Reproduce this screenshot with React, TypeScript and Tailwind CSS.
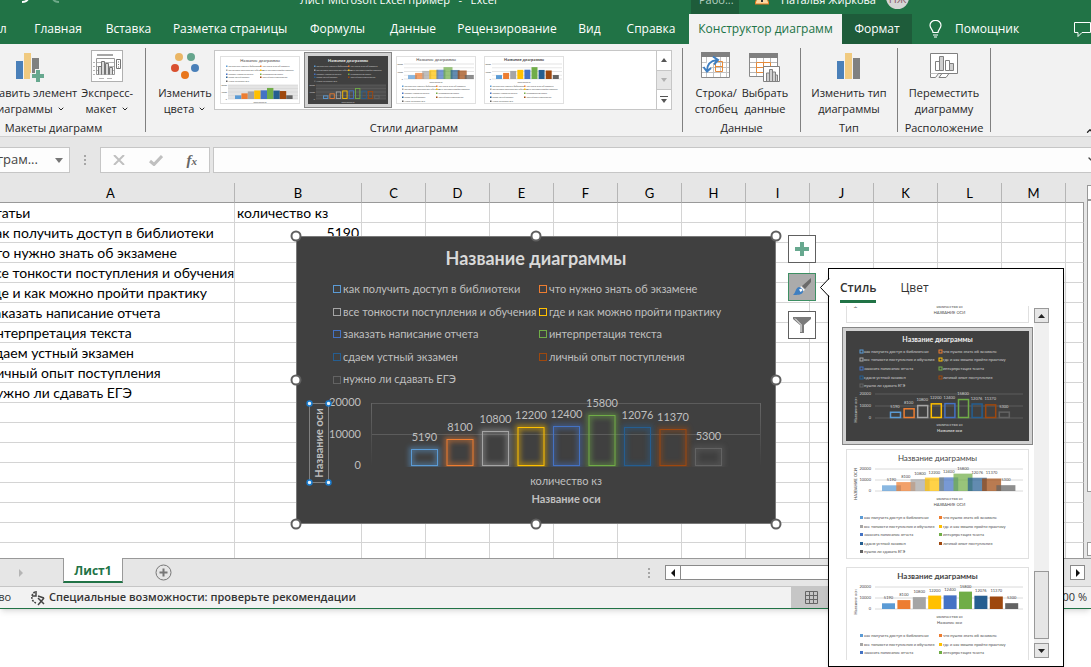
import { useState } from 'react';
import type { ReactNode } from 'react';
import { ChevronDown, ChevronUp } from 'lucide-react';
import clsx from 'clsx';

type Item = { label: string; value: number; color: string };

const ITEMS: Item[] = [
  { label: 'как получить доступ в библиотеки', value: 5190, color: '#5b9bd5' },
  { label: 'что нужно знать об экзамене', value: 8100, color: '#ed7d31' },
  { label: 'все тонкости поступления и обучения', value: 10800, color: '#a5a5a5' },
  { label: 'где и как можно пройти практику', value: 12200, color: '#ffc000' },
  { label: 'заказать написание отчета', value: 12400, color: '#4472c4' },
  { label: 'интерпретация текста', value: 15800, color: '#70ad47' },
  { label: 'сдаем устный экзамен', value: 12076, color: '#255e91' },
  { label: 'личный опыт поступления', value: 11370, color: '#9e480e' },
  { label: 'нужно ли сдавать ЕГЭ', value: 5300, color: '#636363' },
];

const TABS = [
  { label: 'Главная', width: 'w-[72px]' },
  { label: 'Вставка', width: 'w-[69px]' },
  { label: 'Разметка страницы', width: 'w-[134px]' },
  { label: 'Формулы', width: 'w-[81px]' },
  { label: 'Данные', width: 'w-[70px]' },
  { label: 'Рецензирование', width: 'w-[118px]' },
  { label: 'Вид', width: 'w-[47px]' },
  { label: 'Справка', width: 'w-[76px]' },
];

const COLUMNS = ['A', 'B', 'C', 'D', 'E', 'F', 'G', 'H', 'I', 'J', 'K', 'L', 'M', ''];
const ROWS = [
  ['статьи', 'количество кз'],
  ...ITEMS.map((item) => [item.label, String(item.value)]),
  ...Array.from({ length: 10 }, () => ['', '']),
];

type Tone = 'plain' | 'dark' | 'overlap' | 'solid';

type ThumbLayout = {
  width: number;
  height: number;
  title: number;
  titleSize: number;
  textSize: number;
  legend: number[];
  legendX: [number, number];
  plot: [number, number, number, number];
  barStart: number;
  step: number;
  barWidth: number;
  caption: number;
  axis?: number;
};

const RIBBON_TOP: ThumbLayout = {
  width: 80, height: 48, title: 6, titleSize: 4, textSize: 2, legend: [11, 15, 19, 22, 26], legendX: [6, 40],
  plot: [8, 78, 29, 43], barStart: 15, step: 6.4, barWidth: 6.4, caption: 46,
};
const RIBBON_BOTTOM: ThumbLayout = {
  width: 80, height: 48, title: 5, titleSize: 4, textSize: 2, legend: [31, 34, 38, 42, 46], legendX: [6, 40],
  plot: [8, 78, 8, 23], barStart: 12, step: 7.1, barWidth: 6, caption: 26,
};
const PANEL_TOP: ThumbLayout = {
  width: 183, height: 110, title: 11, titleSize: 7, textSize: 4, legend: [22, 30, 39, 48, 56], legendX: [14, 93],
  plot: [29, 177, 63, 87], barStart: 44, step: 13.6, barWidth: 10, caption: 94, axis: 101,
};
const PANEL_BOTTOM: ThumbLayout = {
  width: 183, height: 110, title: 12, titleSize: 8, textSize: 4, legend: [70, 79, 87, 96, 104], legendX: [14, 93],
  plot: [29, 177, 20, 42], barStart: 36, step: 15.4, barWidth: 13, caption: 50, axis: 57,
};

function ChartThumb({ tone, layout }: { tone: Tone; layout: ThumbLayout }) {
  const [x0, x1, y0, y1] = layout.plot;
  const dark = tone === 'dark';
  const ink = dark ? '#d0d0d0' : '#4a4a4a';
  const line = dark ? '#666' : '#d0d0d0';
  const small = layout.axis === undefined;
  const wide = tone === 'overlap';
  const sw = small ? 1.5 : 3;
  const axisTitle = wide ? 'НАЗВАНИЕ ОСИ' : 'Название оси';
  return (
    <svg
      viewBox={`0 0 ${layout.width} ${layout.height}`}
      className="block w-full"
      fontFamily="Lato, sans-serif"
      fontSize={layout.textSize}
      fill={ink}
      aria-hidden="true"
    >
      <rect x="0.5" y="0.5" width={layout.width - 1} height={layout.height - 1} fill={dark ? '#404040' : '#fff'} stroke={dark ? '#404040' : '#e0e0e0'} />
      <text
        x={layout.width / 2}
        y={layout.title}
        textAnchor="middle"
        fontSize={layout.titleSize}
        fontWeight={tone === 'dark' || tone === 'solid' ? 700 : 400}
        fill={dark ? '#eee' : '#444'}
      >
        Название диаграммы
      </text>
      {ITEMS.map((item, i) => {
        const x = layout.legendX[i % 2];
        const y = layout.legend[Math.floor(i / 2)];
        return (
          <g key={item.label}>
            <rect
              x={x}
              y={y - sw}
              width={sw}
              height={sw}
              fill={dark && !small ? 'none' : item.color}
              stroke={dark && !small ? item.color : 'none'}
              strokeWidth="1"
            />
            <text x={x + sw + 1} y={y}>{item.label}</text>
          </g>
        );
      })}
      {small && (tone === 'plain' || dark) && (
        <rect x={x0} y={y0} width={x1 - x0} height={y1 - y0} fill={dark ? '#4d4d4d' : '#e4e4e4'} />
      )}
      {[0, 10000, 20000].map((tick) => {
        const y = y1 - ((y1 - y0) * tick) / 20000;
        return (
          <g key={tick}>
            <line x1={x0} x2={x1} y1={y} y2={y} stroke={line} strokeWidth={small ? 0.6 : 0.8} />
            <text x={x0 - (small ? 1 : 4)} y={y + 1} textAnchor="end">{tick}</text>
          </g>
        );
      })}
      {small && [5000, 15000].map((tick) => {
        const y = y1 - ((y1 - y0) * tick) / 20000;
        return <line key={tick} x1={x0} x2={x1} y1={y} y2={y} stroke={line} strokeWidth="0.5" />;
      })}
      {ITEMS.map((item, i) => {
        const width = wide ? layout.barWidth + (small ? 3 : 6) : layout.barWidth;
        const step = wide && !small ? layout.step - 1.1 : layout.step;
        const x = layout.barStart + i * step;
        const h = ((y1 - y0) * item.value) / 20000;
        return (
          <g key={item.value}>
            {dark ? (
              <rect x={x + 0.5} y={y1 - h + 0.5} width={width - (small ? 2 : 0)} height={h - 1} fill="none" stroke={item.color} strokeWidth={small ? 0.9 : 1.5} />
            ) : (
              <rect x={x} y={y1 - h} width={width} height={h} fill={item.color} opacity={wide ? 0.72 : 1} />
            )}
            {!small && (
              <text x={x + width / 2} y={y1 - h - 4} textAnchor="middle">{item.value}</text>
            )}
          </g>
        );
      })}
      <text x={layout.width / 2 + (small ? 0 : 12)} y={layout.caption + 0.5} textAnchor="middle">количество кз</text>
      {layout.axis !== undefined && (
        <>
          <text x={layout.width / 2 + 12} y={layout.axis} textAnchor="middle" fontWeight={dark ? 700 : 400}>{axisTitle}</text>
          <text transform={`translate(11 ${(y0 + y1) / 2 + 4}) rotate(-90)`} textAnchor="middle">{axisTitle}</text>
        </>
      )}
    </svg>
  );
}

function BarsIcon({ plus = false }: { plus?: boolean }) {
  return (
    <svg width="32" height="32" viewBox="0 0 32 32" aria-hidden="true">
      <path fill="#4a80b9" d="M4 11h7v18H4z" />
      <path fill="#f0ca80" d="M12 3h7v26h-7z" />
      <path fill="#808080" d="M20 8h7v21h-7z" />
      {plus && (
        <>
          <path fill="#f2f2f2" d="M23 19h6v4h4v6h-4v4h-6v-4h-5v-6h5z" />
          <path fill="#67a88f" d="M24 20h4v4h4v4h-4v4h-4v-4h-4v-4h4z" />
        </>
      )}
    </svg>
  );
}

function LayoutIcon() {
  return (
    <svg width="32" height="32" viewBox="0 0 32 32" fill="none" stroke="#757575" aria-hidden="true">
      <rect x="0.5" y="0.5" width="31" height="31" fill="#fff" stroke="#b0b0b0" />
      <path d="M6 5h16" strokeWidth="2" stroke="#a6a6a6" />
      <path d="M5.500 8.500h18v16h-18z" stroke="#999" />
      <path d="M2 12.500h2M2 16.500h2M2 20.500h2M2 24.500h2M8 28.500h5M16 28.500h5M6 12.500h17M6 16.500h17M6 20.500h17" stroke="#b5b5b5" />
      <path d="M7.500 24.500v-8h3v8M10.500 24.500v-13h3v13M14.500 24.500v-11h3v11M18.500 24.500v-7h3v7" fill="#d9d9d9" />
      <path d="M25.500 9.500h4v9h-4z" />
      <path d="M27 12h1M27 14.500h1M27 17h1" />
    </svg>
  );
}

function ColorsIcon() {
  return (
    <svg width="32" height="32" viewBox="0 0 32 32" aria-hidden="true">
      <circle cx="10" cy="7" r="4" fill="#eab665" />
      <circle cx="22" cy="7" r="4" fill="#66a58d" />
      <circle cx="6" cy="18" r="4" fill="#d9502f" />
      <circle cx="26" cy="18" r="4" fill="#4a80b9" />
      <circle cx="16" cy="25" r="4" fill="#e8761c" />
    </svg>
  );
}

function SwitchIcon() {
  return (
    <svg width="32" height="32" viewBox="0 0 32 32" fill="none" aria-hidden="true">
      <path d="M1.500 3.500h28v24h-28z" fill="#fff" stroke="#8a8a8a" />
      <path d="M1 2h29v5H1z" fill="#808080" />
      <path d="M2 12.500h27M2 17.500h27M2 22.500h27M6.500 7v20M13.500 7v20M20.500 7v20M26.500 7v20" stroke="#c4c4c4" />
      <path d="M15.500 11.500h7v10h-7zM15.500 16.500h7" stroke="#e58a3a" />
      <path d="M7 21c0-7 3-10 9-11" stroke="#fff" strokeWidth="5" />
      <path d="M7 21c0-7 3-10 10-11M13 6.500l5 3.500-4 4.500M3.500 17l3.500 4.500 4-3.500" stroke="#3f7fc1" strokeWidth="2" />
    </svg>
  );
}

function SelectDataIcon() {
  return (
    <svg width="32" height="32" viewBox="0 0 32 32" fill="none" aria-hidden="true">
      <path d="M.5 4.500h28v22H.5z" fill="#fff" stroke="#8a8a8a" />
      <path d="M0 3h29v5H0z" fill="#808080" />
      <path d="M1 12.500h27M1 17.500h27M1 22.500h27M7.500 8v18M14.500 8v18M21.500 8v18" stroke="#b8b8b8" />
      <path d="M7.500 12.500h14v10h-14zM14.500 12.500v10M7.500 17.500h14" stroke="#e58a3a" />
      <path d="M14.500 16.500h16v15h-16z" fill="#fff" stroke="#808080" />
      <path d="M17.500 31v-8h3v8M20.500 31V19.500h3V31M23.500 31v-9h3v9M26.500 31v-6h2v6" fill="#d0d0d0" stroke="#808080" />
    </svg>
  );
}

function MoveIcon() {
  return (
    <svg width="32" height="32" viewBox="0 0 32 32" fill="none" stroke="#808080" aria-hidden="true">
      <path d="M2.500 3.500h27v20h-27z" fill="#fff" />
      <path d="M2.500 23.500v4h5l3-4M11 27.500h7l3-4h-7z" fill="#fff" />
      <path d="M7.500 20.500v-9h4v9zM17.500 20.500v-10h4v10z" fill="#fff" />
      <path d="M11.500 20.500v-14h4v14zM21.500 20.500v-7h4v7z" fill="#cfcfcf" />
    </svg>
  );
}

function RibbonButton({ icon, lines, menu = false }: { icon: ReactNode; lines: [string, string]; menu?: boolean }) {
  return (
    <button type="button" className="flex shrink-0 flex-col items-center whitespace-nowrap px-0.5 pt-1.5 text-center leading-4">
      {icon}
      <span className="mt-[3px]">{lines[0]}</span>
      <span className="flex items-center gap-1">
        {lines[1]}
        {menu && <ChevronDown size={8} strokeWidth={3} />}
      </span>
    </button>
  );
}

function RibbonGroup({ title, className, children }: { title: string; className: string; children: ReactNode }) {
  return (
    <section className={clsx('flex shrink-0 flex-col', className)}>
      <div className="flex flex-1 justify-center">{children}</div>
      <h2 className="whitespace-nowrap text-center leading-4">{title}</h2>
    </section>
  );
}

function Divider() {
  return <div className="my-1 w-px shrink-0 bg-[#808080]" />;
}

function StyleGallery({ selected, onSelect }: { selected: number; onSelect: (i: number) => void }) {
  const tones: Tone[] = ['plain', 'dark', 'overlap', 'solid'];
  return (
    <div className="mt-1.5 flex h-[60px] w-[458px] border border-[#c6c6c6] bg-white">
      <div className="flex flex-1 items-center pl-px">
        {tones.map((tone, i) => (
          <button
            key={tone}
            type="button"
            aria-label={`Стиль ${i + 1}`}
            onClick={() => onSelect(i)}
            className={clsx('w-[88px] border p-[3px]', selected === i ? 'border-[#868686] bg-[#d2d2d2]' : 'border-transparent')}
          >
            <ChartThumb tone={tone} layout={i < 2 ? RIBBON_TOP : RIBBON_BOTTOM} />
          </button>
        ))}
      </div>
      <div className="flex w-[15px] flex-col border-l border-[#c6c6c6]">
        <button type="button" aria-label="Вверх" className="flex flex-1 items-center justify-center">
          <svg width="6" height="4"><path d="M0 4h6L3 0z" fill="#555" /></svg>
        </button>
        <button type="button" aria-label="Вниз" className="flex flex-1 items-center justify-center border-y border-[#c6c6c6] bg-[#e6e6e6]">
          <svg width="6" height="4"><path d="M0 0h6L3 4z" fill="#b0b0b0" /></svg>
        </button>
        <button type="button" aria-label="Все стили" className="flex flex-1 items-center justify-center">
          <svg width="8" height="7"><path d="M0 0h8v1H0zM1 3h6L4 7z" fill="#555" /></svg>
        </button>
      </div>
    </div>
  );
}

function TitleBar() {
  return (
    <div className="flex h-[14px] items-start overflow-hidden text-[11px] text-white">
      <svg width="300" height="14" className="shrink-0" fill="none" aria-hidden="true">
        <path d="M22 2c3 0 5-1 6-3" stroke="#fff" strokeWidth="2" />
        <path d="M59 2c-3 0-5-1-6-3" stroke="#6fa98a" strokeWidth="2" />
      </svg>
      <span className="-mt-2 flex-1 whitespace-pre leading-4">Лист Microsoft Excel пример   -   Excel</span>
      <div className="h-full w-12 bg-[#1e5c3a] pl-2">
        <span className="-mt-2 block leading-4 text-[#b5cfc0]">Рабо...</span>
      </div>
      <svg width="14" height="5" className="ml-4 shrink-0" aria-hidden="true">
        <path d="M3-5h8l3 9H0z" fill="#fcd9a0" stroke="#e8761c" />
        <path d="M6 0h2v2H6z" fill="#333" />
      </svg>
      <span className="-mt-2 ml-3 w-[95px] whitespace-nowrap leading-4">Наталья Жиркова</span>
      <span className="-mt-3.5 ml-2.5 mr-[182px] flex size-[23px] items-end justify-center rounded-full bg-[#d5d5d5] leading-5 text-[#8a5a6a]">НЖ</span>
    </div>
  );
}

function RibbonTabs() {
  return (
    <nav className="flex h-[30px] text-white" aria-label="Лента">
      <button type="button" className="-ml-6 w-[46px] pr-4 text-right">Файл</button>
      {TABS.map((tab) => (
        <button key={tab.label} type="button" className={clsx('shrink-0 whitespace-nowrap', tab.width)}>
          {tab.label}
        </button>
      ))}
      <button type="button" className="w-[153px] shrink-0 whitespace-nowrap bg-[#f2f2f2] text-[#217346]">Конструктор диаграмм</button>
      <button type="button" className="w-[70px] shrink-0 bg-[#1e5c3a]">Формат</button>
      <button type="button" className="ml-4 flex items-center gap-3">
        <svg width="15" height="18" fill="none" stroke="#fff" strokeWidth="1.200" aria-hidden="true">
          <path d="M5 12.500c0-3-3-4-3-7.200a5.500 5 0 0 1 11 0c0 3.200-3 4.200-3 7.200zM5 15h5M6 17h3" />
        </svg>
        Помощник
      </button>
      <button type="button" aria-label="Примечания" className="-mr-px ml-auto">
        <svg width="18" height="16" fill="none" stroke="#fff" aria-hidden="true">
          <path d="M.5 1.500h16v10H8l-4 4v-4H.5z" />
        </svg>
      </button>
    </nav>
  );
}

function FormulaBar() {
  return (
    <div className="flex h-[46px] shrink-0 items-start bg-[#e6e6e6] pt-2.5 text-[#444]">
      <button type="button" className="-ml-14 flex h-[26px] w-[126px] items-center justify-between border border-[#c6c6c6] bg-[#fdfdfd] pl-7 pr-1.5 text-[13px]">
        <span>Диаграм...</span>
        <svg width="8" height="5" aria-hidden="true"><path d="M0 0h8L4 5z" fill="#777" /></svg>
      </button>
      <svg width="30" height="26" fill="#a6a6a6" aria-hidden="true"><path d="M14 8h2v2h-2zM14 12h2v2h-2zM14 16h2v2h-2z" /></svg>
      <div className="flex h-[26px] w-[110px] items-center justify-between border border-[#c6c6c6] bg-[#fdfdfd] pl-3 pr-3">
        <button type="button" aria-label="Отмена">
          <svg width="12" height="10" fill="none" stroke="#c0c0c0" strokeWidth="2"><path d="M1 0l10 10M11 0L1 10" /></svg>
        </button>
        <button type="button" aria-label="Ввод">
          <svg width="14" height="11" fill="none" stroke="#c0c0c0" strokeWidth="3"><path d="M1 6l4 3.500L13 1" /></svg>
        </button>
        <button type="button" className="font-['Liberation_Serif',serif] text-[15px] font-bold italic leading-5 text-[#666]">
          f<span className="text-[11px]">x</span>
        </button>
      </div>
      <input aria-label="Строка формул" className="ml-[3px] h-[26px] min-w-0 flex-1 border border-r-0 border-[#c6c6c6] bg-[#fdfdfd] outline-none" />
      <ChevronDown size={8} strokeWidth={4} className="-ml-1 -mr-1 mt-2" />
    </div>
  );
}

function Sheet() {
  return (
    <div className="flex min-h-0 flex-1 overflow-hidden bg-[#e6e6e6] font-[Lato,sans-serif] text-[14px] text-black">
      <div className="min-w-0 flex-1 overflow-hidden">
        <table className="-ml-[13px] w-[calc(100%+13px)] table-fixed border-separate border-spacing-0">
          <colgroup>
            <col className="w-[248px]" />
            <col className="w-[127px]" />
            {COLUMNS.slice(2, 13).map((c) => <col key={c} className="w-16" />)}
            <col />
          </colgroup>
          <thead>
            <tr>
              {COLUMNS.map((c) => (
                <th key={c} className="h-5 border-b border-r border-b-[#999] border-r-[#b5b5b5] p-0 pt-0.5 text-[13px] font-normal leading-[17px] last:border-r-0">{c}</th>
              ))}
            </tr>
          </thead>
          <tbody className="bg-white">
            {ROWS.map(([label, value], i) => (
              <tr key={i}>
                <td className="h-5 whitespace-nowrap border-b border-r border-[#d4d4d4] p-0 pl-px leading-[19px]">{label}</td>
                <td className={clsx('h-5 whitespace-nowrap border-b border-r border-[#d4d4d4] px-[2px] py-0 leading-[19px]', i > 0 && 'text-right')}>{value}</td>
                {COLUMNS.slice(2).map((c) => (
                  <td key={c} className="h-5 border-b border-r border-[#d4d4d4] p-0 last:border-r-[#999]" />
                ))}
              </tr>
            ))}
          </tbody>
        </table>
      </div>
      <div className="flex w-[7px] flex-col pb-0.5 pl-[3px] pt-0.5">
        <div className="h-[15px] border border-r-0 border-[#999] bg-white" />
        <div className="h-[292px] border border-r-0 border-[#999] bg-white" />
        <div className="mt-auto h-[14px] border border-r-0 border-[#999] bg-white" />
      </div>
    </div>
  );
}

const handleSpots = [
  'left-0 top-0', 'left-1/2 top-0', 'left-full top-0',
  'left-0 top-1/2', 'left-full top-1/2',
  'left-0 top-full', 'left-1/2 top-full', 'left-full top-full',
];

function Chart() {
  const base = 74;
  const scale = 63 / 20000;
  return (
    <figure className="absolute left-[296px] top-[236px] flex h-[288px] w-[480px] flex-col border border-[#7a7a7a] bg-[#404040] pb-px font-[Lato,sans-serif] text-[11px] text-[#bfbfbf]">
      <figcaption className="pt-[7px] text-center text-[18px] font-bold leading-7 text-[#d9d9d9]">Название диаграммы</figcaption>
      <ul className="ml-9 mt-1.5 grid h-[113px] shrink-0 grid-cols-[206px_1fr] grid-rows-5">
        {ITEMS.map((item) => (
          <li key={item.label} className="flex items-center gap-0.5 whitespace-nowrap">
            <span className="size-2 shrink-0 border" style={{ borderColor: item.color }} />
            {item.label}
          </li>
        ))}
      </ul>
      <svg
        viewBox="0 0 478 130"
        preserveAspectRatio="xMidYMax"
        className="min-h-0 w-full flex-1 overflow-visible"
        fontSize="11"
        fill="#bfbfbf"
        role="img"
        aria-label="Гистограмма"
      >
        <defs>
          <filter id="glow" x="-50%" y="-50%" width="200%" height="200%">
            <feGaussianBlur stdDeviation="2.500" />
          </filter>
          <linearGradient id="fade" x1="0" y1="0" x2="0" y2="1">
            <stop offset="0" stopColor="#666" />
            <stop offset="1" stopColor="#404040" />
          </linearGradient>
          <clipPath id="plot"><path d="M70 0h400v75H70z" /></clipPath>
        </defs>
        <path d="M74 11.500h390M74 42.500h390" stroke="#5c5c5c" />
        <path d="M74 11h1v63h-1zM463 11h1v63h-1z" fill="url(#fade)" />
        {[20000, 10000, 0].map((tick) => (
          <text key={tick} x="64" y={base + 3 - tick * scale} textAnchor="end">{tick}</text>
        ))}
        {ITEMS.map((item, i) => {
          const x = 114.5 + i * 35.5;
          const h = Math.round(item.value * scale);
          return (
            <g key={item.value}>
              <g clipPath="url(#plot)" fill="none" stroke={item.color}>
                <rect x={x} y={base - h - 0.5} width="26" height={h} strokeWidth="5" opacity="0.5" filter="url(#glow)" />
                <rect x={x} y={base - h - 0.5} width="26" height={h} />
              </g>
              <text x={x + 13} y={base - h - 9} textAnchor="middle">{item.value}</text>
            </g>
          );
        })}
        <text x="269" y="93" textAnchor="middle">количество кз</text>
        <text x="269" y="111" textAnchor="middle" fontWeight="700">Название оси</text>
        <path d="M12.500 11.500h19v79h-19z" fill="none" stroke="#808080" />
        <text transform="translate(26 51) rotate(-90)" textAnchor="middle" fontWeight="700">Название оси</text>
        {[[12.5, 11.5], [31.5, 11.5], [12.5, 90.5], [31.5, 90.5]].map(([x, y]) => (
          <circle key={`${x}-${y}`} cx={x} cy={y} r="2.500" fill="#e5f2fb" stroke="#1979ca" strokeWidth="1.500" />
        ))}
      </svg>
      <div className="pointer-events-none absolute -inset-px">
        {handleSpots.map((spot) => (
          <span key={spot} className={clsx('absolute size-[11px] -translate-x-1/2 -translate-y-1/2 rounded-full border-2 border-[#606060] bg-white', spot)} />
        ))}
      </div>
    </figure>
  );
}

function ChartTools() {
  return (
    <div className="absolute left-[788px] top-[235px] flex flex-col gap-2.5">
      <button type="button" aria-label="Элементы диаграммы" className="flex size-7 items-center justify-center border border-[#606060] bg-white">
        <svg width="14" height="14"><path d="M5 0h4v5h5v4H9v5H5V9H0V5h5z" fill="#67a88f" /></svg>
      </button>
      <button type="button" aria-label="Стили диаграмм" className="flex size-7 items-center justify-center border border-[#3d8f63] bg-[#ababab]">
        <svg width="18" height="18" aria-hidden="true">
          <path d="M18 0v4l-6 7-3-3z" fill="#6a6a6a" />
          <path d="M8 8l4 4-2 1-3-3z" fill="#fff" />
          <path d="M6 9c2 0 5 3 4 5-1 3-6 3-10 3 3-2 2-7 6-8z" fill="#3f7fc1" />
          <path d="M6 11.500l2.500-1 1 2-2 1.500z" fill="#fff" />
        </svg>
      </button>
      <button type="button" aria-label="Фильтры диаграммы" className="flex size-7 items-center justify-center border border-[#606060] bg-white">
        <svg width="18" height="16" aria-hidden="true">
          <path d="M0 0h18v2l-7 6v8H7V8L0 2z" fill="#7a7a7a" />
          <path d="M2 1.500l6 6V15" fill="none" stroke="#fff" />
        </svg>
      </button>
    </div>
  );
}

function StylePanel() {
  const [tab, setTab] = useState('Стиль');
  return (
    <aside className="absolute bottom-0 right-[27px] top-[268px] flex w-[236px] flex-col border border-black bg-white pb-1.5 shadow-md">
      <svg width="10" height="20" className="absolute -left-[9px] top-[9px]" aria-hidden="true">
        <path d="M10 0L1 9.500 10 19z" fill="#fff" />
        <path d="M9 .5L.5 9.500 9 18.500" fill="none" stroke="#000" />
      </svg>
      <div className="flex h-[34px] shrink-0 gap-6 pl-[11px] text-[#333]" role="tablist">
        {['Стиль', 'Цвет'].map((name) => (
          <button
            key={name}
            type="button"
            role="tab"
            aria-selected={tab === name}
            onClick={() => setTab(name)}
            className={clsx('border-b-[3px] pt-1.5', tab === name ? 'border-[#217346] font-semibold' : 'border-transparent')}
          >
            {name}
          </button>
        ))}
      </div>
      <div className="mt-[3px] flex min-h-0 flex-1 pl-[13px]">
        <div className="w-[191px] shrink-0 overflow-hidden">
          <div className="-mt-[97px]">
            {([['overlap', PANEL_TOP], ['dark', PANEL_TOP], ['overlap', PANEL_BOTTOM], ['solid', PANEL_BOTTOM]] as [Tone, ThumbLayout][]).map(([tone, layout], i) => (
              <button
                key={i}
                type="button"
                aria-label={`Стиль ${i + 5}`}
                className={clsx('block w-full border p-[3px]', tone === 'dark' ? 'border-[#868686] bg-[#d2d2d2]' : 'border-transparent')}
              >
                <ChartThumb tone={tone} layout={layout} />
              </button>
            ))}
          </div>
        </div>
        <div className="mb-0.5 ml-px mt-0.5 flex w-[15px] shrink-0 flex-col bg-[#f0f0f0]">
          <button type="button" aria-label="Прокрутить вверх" className="flex h-[15px] items-center justify-center border border-[#999] bg-[#e6e6e6]">
            <svg width="7" height="4"><path d="M0 4h7L3.500 0z" fill="#222" /></svg>
          </button>
          <div className="mt-auto h-[68px] border border-[#999] bg-[#e6e6e6]" />
          <button type="button" aria-label="Прокрутить вниз" className="mt-1 flex h-[15px] items-center justify-center border border-[#999] bg-[#e6e6e6]">
            <svg width="7" height="4"><path d="M0 0h7L3.500 4z" fill="#222" /></svg>
          </button>
        </div>
      </div>
    </aside>
  );
}

function SheetTabs() {
  return (
    <div className="flex h-7 shrink-0 border-t border-[#999] bg-[#e6e6e6]">
      <div className="flex w-[63px] items-center pl-[19px]">
        <svg width="4" height="8" aria-hidden="true"><path d="M0 0l4 4-4 4z" fill="#b5b5b5" /></svg>
      </div>
      <button type="button" className="-mt-px h-[25px] w-[60px] border-x border-b-2 border-x-[#999] border-b-[#217346] bg-white pt-0.5 font-bold text-[#217346]">Лист1</button>
      <button type="button" aria-label="Новый лист" className="ml-8">
        <svg width="17" height="17" fill="none" stroke="#777" aria-hidden="true">
          <circle cx="8.500" cy="8.500" r="7.500" />
          <path d="M8.500 4.500v8M4.500 8.500h8" strokeWidth="2" />
        </svg>
      </button>
      <div className="ml-auto flex w-[444px] items-center">
        <svg width="18" height="12" fill="#a6a6a6" aria-hidden="true"><path d="M1 1h2v2H1zM1 5h2v2H1zM1 9h2v2H1z" /></svg>
        <div className="flex h-[15px] flex-1">
          <div className="flex w-4 items-center justify-center border border-[#8a8a8a] bg-white">
            <svg width="4" height="8"><path d="M4 0v8L0 4z" fill="#111" /></svg>
          </div>
          <div className="w-[320px] border border-l-0 border-[#8a8a8a] bg-white" />
          <div className="ml-auto mr-1.5 flex w-[15px] items-center justify-center border border-[#8a8a8a] bg-white">
            <svg width="4" height="8"><path d="M0 0v8l4-4z" fill="#111" /></svg>
          </div>
        </div>
      </div>
    </div>
  );
}

function StatusBar() {
  return (
    <footer className="flex h-[22px] shrink-0 items-center border-t border-[#c6c6c6] bg-[#f2f2f2] text-[11px] text-[#333]">
      <span className="-ml-[26px] w-14">Готово</span>
      <button type="button" className="flex items-center gap-[3px] font-semibold">
        <svg width="16" height="16" fill="none" stroke="#444" aria-hidden="true">
          <path d="M5 2a6 6 0 0 0 1 11" strokeDasharray="2 1" strokeWidth="1.500" />
          <path d="M6 1v5H2M8 6l6 2M8 8l6 6M14 8l-6 7" strokeWidth="1.500" />
        </svg>
        Специальные возможности: проверьте рекомендации
      </button>
      <button type="button" aria-label="Обычный" className="ml-auto flex h-full w-10 items-center justify-center bg-[#c6c6c6]">
        <svg width="13" height="13" fill="none" stroke="#666"><path d="M.5.5h12v12H.5zM4.500 0v13M8.500 0v13M0 4.500h13M0 8.500h13" /></svg>
      </button>
      <span className="ml-[225px] mr-1 w-[31px] text-right">100 %</span>
    </footer>
  );
}

export default function App() {
  const [style, setStyle] = useState(1);
  return (
    <div className="relative h-screen overflow-hidden bg-white font-['Open_Sans','Noto_Sans',sans-serif] text-xs">
      <main className="flex h-[calc(100vh-58px)] flex-col border-b border-[#217346] shadow-md">
        <header className="h-11 shrink-0 bg-[#217346]">
          <TitleBar />
          <RibbonTabs />
        </header>
        <div className="flex h-[93px] shrink-0 border-b border-[#cfcfcf] bg-[#f2f2f2] text-[11px] text-[#262626]">
          <RibbonGroup title="Макеты диаграмм" className="-ml-[38px] w-[183px]">
            <div className="flex flex-1 justify-end pr-2.5">
              <RibbonButton icon={<BarsIcon plus />} lines={['Добавить элемент', 'диаграммы']} menu />
              <RibbonButton icon={<LayoutIcon />} lines={['Экспресс-', 'макет']} menu />
            </div>
          </RibbonGroup>
          <Divider />
          <RibbonGroup title="Стили диаграмм" className="w-[536px]">
            <RibbonButton icon={<ColorsIcon />} lines={['Изменить', 'цвета']} menu />
            <StyleGallery selected={style} onSelect={setStyle} />
          </RibbonGroup>
          <Divider />
          <RibbonGroup title="Данные" className="w-[117px]">
            <RibbonButton icon={<SwitchIcon />} lines={['Строка/', 'столбец']} />
            <RibbonButton icon={<SelectDataIcon />} lines={['Выбрать', 'данные']} />
          </RibbonGroup>
          <Divider />
          <RibbonGroup title="Тип" className="w-24">
            <RibbonButton icon={<BarsIcon />} lines={['Изменить тип', 'диаграммы']} />
          </RibbonGroup>
          <Divider />
          <RibbonGroup title="Расположение" className="w-[92px]">
            <RibbonButton icon={<MoveIcon />} lines={['Переместить', 'диаграмму']} />
          </RibbonGroup>
          <Divider />
          <button type="button" aria-label="Свернуть ленту" className="-mr-1 ml-auto self-end">
            <ChevronUp size={10} strokeWidth={3} />
          </button>
        </div>
        <FormulaBar />
        <Sheet />
        <SheetTabs />
        <StatusBar />
      </main>
      <Chart />
      <ChartTools />
      <StylePanel />
    </div>
  );
}
